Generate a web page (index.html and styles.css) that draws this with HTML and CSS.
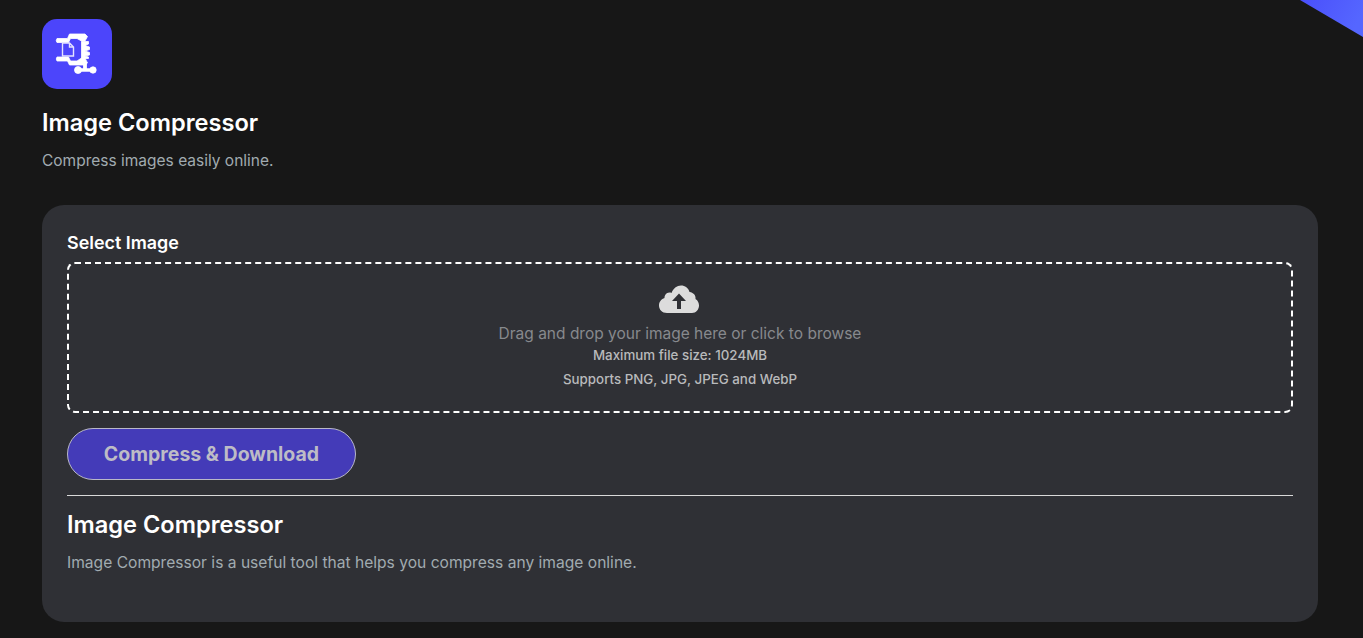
FILE: index.html
```html
<!DOCTYPE html>
<html lang="en">
<head>
<meta charset="utf-8">
<title>Image Compressor</title>
<link rel="stylesheet" href="styles.css">
</head>
<body>
<svg class="corner" width="63" height="37" viewBox="0 0 63 37" aria-hidden="true">
  <defs><linearGradient id="cg" x1="0" y1="0" x2="1" y2="0.3"><stop offset="0" stop-color="#4a4ffb"/><stop offset="1" stop-color="#5566ff"/></linearGradient></defs>
  <polygon points="0,0 63,0 63,37" fill="url(#cg)"/>
</svg>
<main class="page">
  <header class="head">
    <div class="logo">
      <svg width="50" height="50" viewBox="0 -1 50 50" aria-hidden="true">
        <g fill="#fff" stroke="#fff" stroke-width="0.800" stroke-linejoin="round">
          <path d="M5 8.500 H15.500 L17.500 4 H33 L35.500 6.500 L33 11 H29.500 L25 8.500 H18.500 L16.500 12.500 H5 Q3.500 10.500 5 8.500 Z"/>
          <path d="M5 27 H16.500 L18.500 31 H25 L29.500 28 H33 L35.500 33 L33 35 H17.500 L15.500 31 H5 Q3.500 29 5 27 Z"/>
          <path d="M29.500 11.500 H36.500 V14 L33 15.500 L37.500 17 V19.500 L33 21 L37.500 22.500 V25 L33 26 L36.500 27 V28.500 H29.500 Z"/>
          <rect x="31.500" y="33" width="3" height="7"/>
          <rect x="26" y="38.700" width="15" height="2.600"/>
          <circle cx="26" cy="40" r="3.500"/>
          <circle cx="41" cy="40" r="3.200"/>
        </g>
        <path d="M10.500 13 H17.500 L21.500 17 V26 H10.500 Z M17.500 13 V17 H21.500" fill="none" stroke="#e4e2ff" stroke-width="1.400"/>
      </svg>
    </div>
    <h1 class="title">Image Compressor</h1>
    <p class="lead">Compress images easily online.</p>
  </header>
  <section class="card">
    <label class="field-label">Select Image</label>
    <div class="drop">
      <svg class="cloud" width="42" height="30" viewBox="0 0 42 30" aria-hidden="true">
        <path d="M9 29 C4 29 1 25.500 1 21.500 C1 17.500 3.500 15 6.500 14 C6.500 13 6.500 12.500 7 11.500 C8 9 11 8 13.500 9 C15 4.500 19 1.500 23 1.500 C27 1.500 30.500 4 31.500 8 C36 8.500 38 12 37.500 15 C40 16.500 41 19 41 21.500 C41 25.500 38 29 34 29 Z" fill="#dcdcdc"/>
        <path d="M21 9.500 L28 17 H23 V25 H19 V17 H14 Z" fill="#2f3035"/>
      </svg>
      <p class="drop-main">Drag and drop your image here or click to browse</p>
      <p class="drop-note first">Maximum file size: 1024MB</p>
      <p class="drop-note">Supports PNG, JPG, JPEG and WebP</p>
    </div>
    <button class="submit" type="button">Compress &amp; Download</button>
    <hr class="rule">
    <h2 class="title sub">Image Compressor</h2>
    <p class="lead">Image Compressor is a useful tool that helps you compress any image online.</p>
  </section>
</main>
</body>
</html>
```
FILE: styles.css
```css
* { box-sizing: border-box; }
html, body { margin: 0; height: 100%; }
body {
  background: #171717;
  color: #fff;
  font-family: "Inter", "Liberation Sans", sans-serif;
  overflow: hidden;
  position: relative;
}
.corner { position: absolute; top: 0; right: 0; display: block; }
.page { padding: 19px 45px 0 42px; }
.head { display: flex; flex-direction: column; align-items: flex-start; }
.logo {
  width: 70px; height: 70px;
  background: #4c45fb;
  border-radius: 15px;
  display: flex; align-items: center; justify-content: center;
}
.title {
  margin: 20px 0 0;
  font-size: 23.600px;
  line-height: 28px;
  font-weight: 600;
  color: #fff;
}
.lead {
  margin: 13px 0 0;
  font-size: 15.500px;
  line-height: 22px;
  font-weight: 400;
  color: #a1abb0;
}
.card {
  margin-top: 33px;
  height: 417px;
  background: #2f3035;
  border-radius: 22px;
  padding: 27px 25px 0;
  display: flex; flex-direction: column;
}
.field-label { font-size: 17.900px; line-height: 22px; font-weight: 600; color: #fff; }
.drop {
  margin-top: 8px;
  height: 151px;
  border: 2px dashed #fff;
  border-radius: 8px;
  padding-top: 20px;
  display: flex; flex-direction: column; align-items: center;
}
.cloud { display: block; margin-left: -2px; }
.drop-main { margin: 9px 0 0; font-size: 15.500px; line-height: 22px; color: #87898d; }
.drop-note { margin: 0; font-size: 13.350px; line-height: 24px; font-weight: 500; color: #b9babc; }
.drop-note.first { margin-top: -2px; }
.submit {
  margin-top: 15px;
  width: 289px; height: 52px;
  border: 1px solid #b9b8c8;
  border-radius: 26px;
  background: #443bb8;
  color: #bdbcc6;
  font-family: inherit;
  font-size: 19.500px;
  font-weight: 700;
  padding: 0;
}
.rule { margin: 15px 0 0; border: 0; border-top: 1px solid #d9d9d9; width: 100%; }
.sub { margin-top: 15px; }
.card .lead { margin-top: 13px; font-size: 15.600px; }
```
